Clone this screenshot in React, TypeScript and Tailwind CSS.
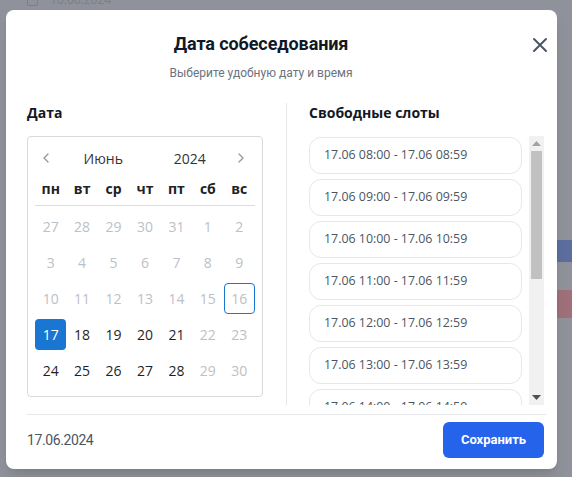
import { ChevronLeft, ChevronRight } from "lucide-react";

const weekDays = ["пн", "вт", "ср", "чт", "пт", "сб", "вс"];

type Day = { n: number; muted?: boolean; selected?: boolean; today?: boolean };

const days: Day[] = [
  { n: 27, muted: true },
  { n: 28, muted: true },
  { n: 29, muted: true },
  { n: 30, muted: true },
  { n: 31, muted: true },
  { n: 1, muted: true },
  { n: 2, muted: true },
  { n: 3, muted: true },
  { n: 4, muted: true },
  { n: 5, muted: true },
  { n: 6, muted: true },
  { n: 7, muted: true },
  { n: 8, muted: true },
  { n: 9, muted: true },
  { n: 10, muted: true },
  { n: 11, muted: true },
  { n: 12, muted: true },
  { n: 13, muted: true },
  { n: 14, muted: true },
  { n: 15, muted: true },
  { n: 16, muted: true, today: true },
  { n: 17, selected: true },
  { n: 18 },
  { n: 19 },
  { n: 20 },
  { n: 21 },
  { n: 22, muted: true },
  { n: 23, muted: true },
  { n: 24 },
  { n: 25 },
  { n: 26 },
  { n: 27 },
  { n: 28 },
  { n: 29, muted: true },
  { n: 30, muted: true },
];

const hours = [8, 9, 10, 11, 12, 13, 14, 15, 16, 17, 18, 19];
const pad = (h: number) => (h < 10 ? "0" + h : "" + h);

const roboto = { fontFamily: 'Roboto, "Noto Sans", sans-serif' };

function Calendar() {
  return (
    <div className="mt-[13px] w-[236px] rounded border border-[#d9d9d9] px-[7px] pb-[8px] pt-[6px]">
      <div className="flex h-[30px] items-center pl-[3px] pr-[6px] text-[14px] text-[#333]">
        <ChevronLeft size={16} strokeWidth={2} className="text-[#9a9a9a]" />
        <div className="flex flex-1">
          <span className="flex-1 pl-[6px] text-center">Июнь</span>
          <span className="flex-1 text-center">2024</span>
        </div>
        <ChevronRight size={16} strokeWidth={2} className="text-[#9a9a9a]" />
      </div>
      <div className="mt-[6px] grid grid-cols-7 border-b border-[#dedede] pb-[6px]">
        {weekDays.map((d) => (
          <div key={d} className="h-[20px] text-center text-[14px] font-bold leading-[20px] text-[#222]">
            {d}
          </div>
        ))}
      </div>
      <div className="mt-[2px] grid grid-cols-7">
        {days.map((d, i) => (
          <div key={i} className="flex h-[36px] items-center justify-center">
            <div
              className={
                "flex h-[31px] w-[31px] items-center justify-center rounded text-[14px] " +
                (d.selected
                  ? "bg-[#1976d2] text-white"
                  : d.muted
                  ? "text-[#bdc0c6]"
                  : "text-[#1f1f1f]") +
                (d.today ? " border border-[#1976d2]" : "")
              }
            >
              {d.n}
            </div>
          </div>
        ))}
      </div>
    </div>
  );
}

function Scrollbar() {
  return (
    <div className="flex w-[15px] shrink-0 flex-col items-center bg-[#f1f1f1]">
      <div className="flex h-[15px] items-center justify-center">
        <svg width="9" height="5" viewBox="0 0 9 5">
          <path d="M0 5 L4.5 0 L9 5 Z" fill="#a3a3a3" />
        </svg>
      </div>
      <div className="h-[128px] w-[11px] bg-[#c1c1c1]" />
      <div className="flex-1" />
      <div className="flex h-[15px] items-center justify-center">
        <svg width="9" height="5" viewBox="0 0 9 5">
          <path d="M0 0 L4.5 5 L9 0 Z" fill="#505050" />
        </svg>
      </div>
    </div>
  );
}

export default function App() {
  return (
    <div
      className="relative h-[477px] w-[572px] overflow-hidden bg-[#8f929a]"
      style={{ fontFamily: '"Open Sans", "Noto Sans", sans-serif' }}
    >
      {/* dimmed page behind the dialog */}
      <div className="-mt-[9px] flex items-center gap-[12px] pl-[27px]">
        <div className="h-[11px] w-[11px] rounded-[2px] border border-[#7c7f87]" />
        <span className="text-[12px] text-[#7c7f87]">16.06.2024</span>
      </div>
      <div className="absolute right-0 top-[240px] h-[22px] w-[16px] bg-[#5b6e9e]" />
      <div className="absolute right-0 top-[290px] h-[28px] w-[16px] bg-[#a0707a]" />

      <div className="absolute left-[6px] top-[10px] flex h-[459px] w-[551px] flex-col rounded-lg bg-white pb-[11px] pl-[21px] pr-[11px] pt-[20px] shadow-lg">
        <button className="absolute right-[9px] top-[27px] text-[#4b5563]">
          <svg width="16" height="16" viewBox="0 0 16 16" fill="none" stroke="currentColor" strokeWidth="2" strokeLinecap="round">
            <path d="M2 2 L14 14 M14 2 L2 14" />
          </svg>
        </button>
        <div className="pr-[51px] text-center" style={roboto}>
          <h2 className="text-[18px] font-bold leading-[28px] tracking-[-0.1px] text-[#111827]">Дата собеседования</h2>
          <p className="mt-[7px] text-[12px] leading-[16px] text-[#6b7280]">
            Выберите удобную дату и время
          </p>
        </div>

        <div className="mt-[22px] flex h-[302px]">
          <div className="w-[237px] shrink-0">
            <div className="text-[14px] font-bold leading-[20px] text-[#111827]">Дата</div>
            <Calendar />
          </div>
          <div className="mx-[22px] w-px bg-[#e5e7eb]" />
          <div className="flex flex-1 flex-col">
            <div className="text-[14px] font-bold leading-[20px] text-[#111827]">Свободные слоты</div>
            <div className="mt-[13px] flex h-[269px] w-[235px]">
              <div className="flex-1 overflow-hidden pr-[7px] pt-[1px]">
                <div className="flex flex-col gap-[5px]">
                  {hours.map((h) => (
                    <div
                      key={h}
                      className="flex h-[37px] shrink-0 items-center rounded-[12px] border border-[#e5e7eb] pl-[14px] text-[12.4px] text-[#4b5563]"
                    >
                      17.06 {pad(h)}:00 - 17.06 {pad(h)}:59
                    </div>
                  ))}
                </div>
              </div>
              <Scrollbar />
            </div>
          </div>
        </div>

        <div className="mt-[9px] flex flex-1 items-center justify-between border-t border-[#e5e7eb] pr-[2px] pt-[7px]" style={roboto}>
          <span className="text-[14px] tracking-[-0.4px] text-[#4b5563]">17.06.2024</span>
          <button className="h-[36px] w-[101px] rounded-md bg-[#2563eb] text-[13px] font-bold text-white">
            Сохранить
          </button>
        </div>
      </div>
    </div>
  );
}
